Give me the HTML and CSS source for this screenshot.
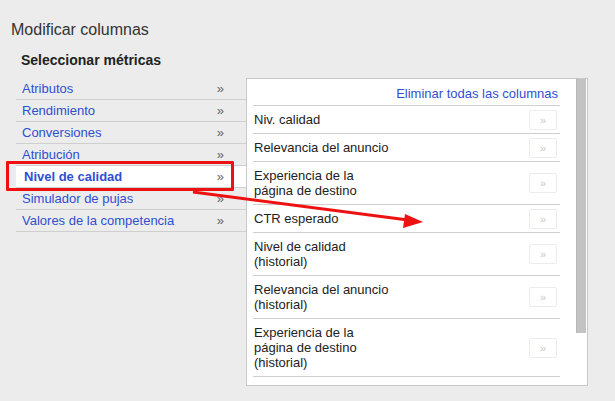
FILE: index.html
```html
<!DOCTYPE html>
<html lang="es">
<head>
    <meta charset="utf-8">
    <title>Modificar columnas</title>
    <link rel="stylesheet" href="styles.css">
</head>
<body>
    <div class="page">
        <h1 class="title">Modificar columnas</h1>
        <h2 class="subtitle">Seleccionar métricas</h2>

        <div class="columns">
            <ul class="groups">
                <li class="group"><span>Atributos</span><span class="chev">»</span></li>
                <li class="group"><span>Rendimiento</span><span class="chev">»</span></li>
                <li class="group"><span>Conversiones</span><span class="chev">»</span></li>
                <li class="group"><span>Atribución</span><span class="chev">»</span></li>
                <li class="group selected"><span>Nivel de calidad</span><span class="chev">»</span></li>
                <li class="group"><span>Simulador de pujas</span><span class="chev">»</span></li>
                <li class="group"><span>Valores de la competencia</span><span class="chev">»</span></li>
            </ul>

            <div class="panel">
                <div class="panel-body">
                    <div class="panel-head">
                        <a href="#" class="remove-all">Eliminar todas las columnas</a>
                    </div>
                    <div class="metric"><span>Niv. calidad</span><button class="add">»</button></div>
                    <div class="metric"><span>Relevancia del anuncio</span><button class="add">»</button></div>
                    <div class="metric"><span>Experiencia de la<br>página de destino</span><button class="add">»</button></div>
                    <div class="metric"><span>CTR esperado</span><button class="add">»</button></div>
                    <div class="metric"><span>Nivel de calidad<br>(historial)</span><button class="add">»</button></div>
                    <div class="metric"><span>Relevancia del anuncio<br>(historial)</span><button class="add">»</button></div>
                    <div class="metric"><span>Experiencia de la<br>página de destino<br>(historial)</span><button class="add">»</button></div>
                </div>
                <div class="scrollbar"><div class="thumb"></div></div>
            </div>
        </div>
    </div>

    <!-- annotation drawn over the screenshot -->
    <div class="highlight"></div>
    <svg class="arrow" width="615" height="401" viewBox="0 0 615 401">
        <line x1="193" y1="192" x2="408" y2="220" stroke="#ee1111" stroke-width="3"/>
        <polygon points="423,222 405,214 403,228" fill="#ee1111"/>
    </svg>
</body>
</html>
```

FILE: styles.css
```css
body {
    margin: 0;
    background-color: #ececec;
    font-family: "Liberation Sans", Arial, sans-serif;
    color: #222;
}

.page {
    padding: 21px 0 0 11px;
}

.title {
    margin: 0;
    font-size: 16px;
    font-weight: normal;
    line-height: 18px;
    color: #333;
}

.subtitle {
    margin: 13px 0 0 10px;
    font-size: 14px;
    font-weight: bold;
    line-height: 16px;
    color: #222;
}

.columns {
    display: flex;
    align-items: flex-start;
    margin: 10px 0 0 5px;
}

/* Left list of metric groups */
.groups {
    list-style: none;
    margin: 0;
    padding: 0;
    width: 230px;
}

.group {
    display: flex;
    justify-content: space-between;
    padding: 3px 22px 3px 6px;
    font-size: 13px;
    line-height: 15px;
    color: #2f4fd0;
    border-bottom: 1px solid #cfcfcf;
}

.group.selected {
    background-color: #fff;
    font-weight: bold;
    padding-left: 8px;
}

.chev {
    color: #666;
    font-weight: normal;
    font-size: 13px;
}

/* Right panel */
.panel {
    display: flex;
    width: 340px;
    background-color: #fff;
    border: 1px solid #c8c8c8;
}

.panel-body {
    flex: 1;
    padding: 0 16px 8px 6px;
}

.panel-head {
    text-align: right;
    padding: 6px 2px 4px 0;
    line-height: 15px;
    border-bottom: 1px solid #cfcfcf;
}

.remove-all {
    font-size: 13px;
    color: #2f4fd0;
    text-decoration: none;
}

.metric {
    display: flex;
    align-items: center;
    justify-content: space-between;
    padding: 6px 3px 6px 1px;
    font-size: 13px;
    line-height: 15px;
    color: #222;
    border-bottom: 1px solid #cfcfcf;
}

.add {
    width: 28px;
    height: 20px;
    margin: -3px 0;
    padding: 0;
    background-color: #fff;
    border: 1px solid #ececec;
    border-radius: 2px;
    color: #c8c8c8;
    font-family: "Liberation Sans", Arial, sans-serif;
    font-size: 11px;
}

.scrollbar {
    width: 10px;
    margin-right: 1px;
}

.thumb {
    height: 254px;
    background-color: #c3c3c3;
    border-left: 1px solid #b8b8b8;
}

/* Red annotation */
.highlight {
    position: absolute;
    left: 6px;
    top: 161px;
    width: 222px;
    height: 24px;
    border: 3px solid #ee1111;
    border-radius: 1px;
}

.arrow {
    position: absolute;
    left: 0;
    top: 0;
}
```
